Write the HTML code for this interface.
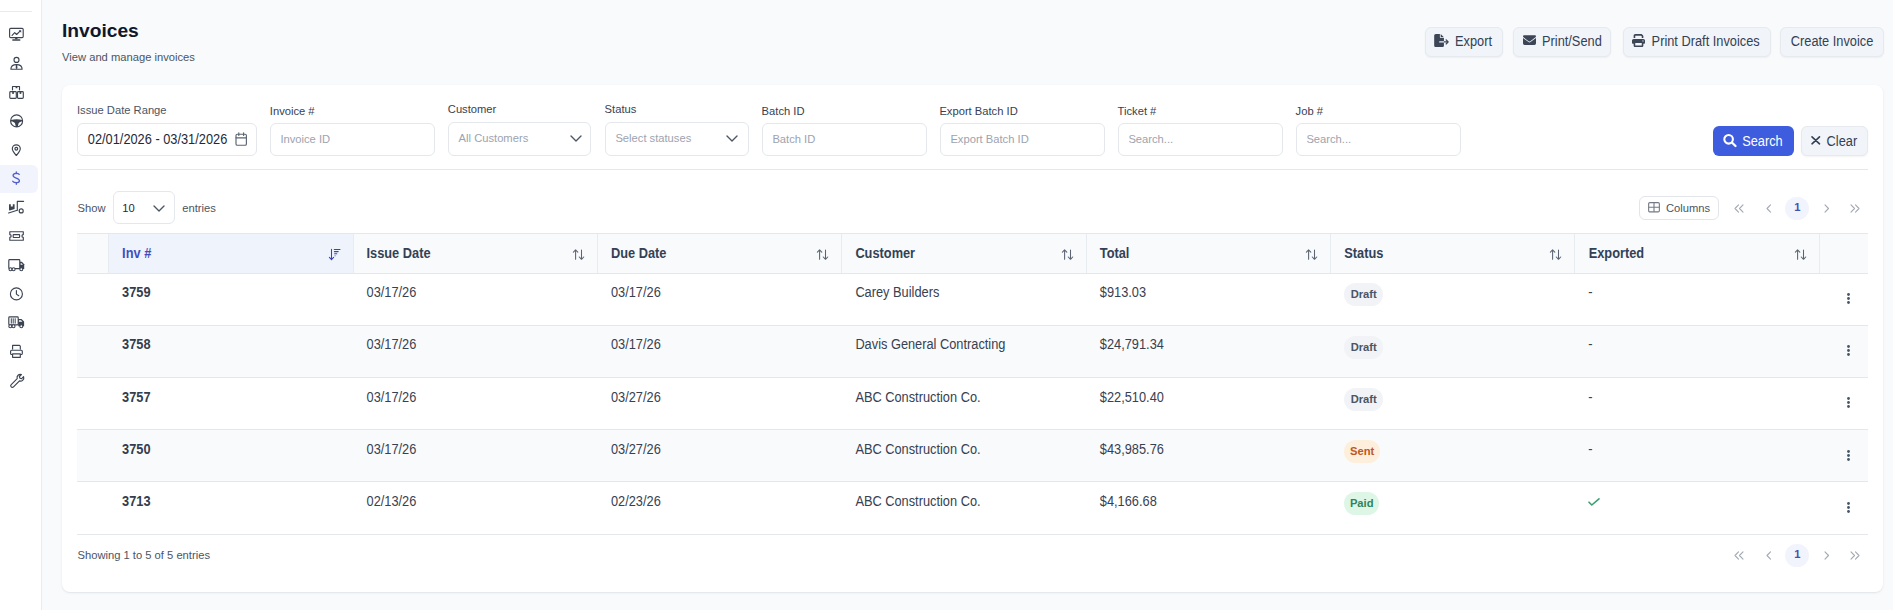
<!DOCTYPE html><html><head><meta charset="utf-8"><style>
html,body{margin:0;padding:0;width:1893px;height:610px;overflow:hidden;background:#f8fafc;font-family:"Liberation Sans",sans-serif;}
.t{position:absolute;white-space:nowrap;line-height:1;}
.b{position:absolute;box-sizing:border-box;}
svg{position:absolute;overflow:visible}
</style></head><body>
<div class="b" style="left:0px;top:0px;width:42px;height:610px;background:#fff;border-right:1px solid #e8ebf0"></div>
<div class="b" style="left:0px;top:11px;width:32px;height:1px;background:#e8eaee"></div>
<div class="b" style="left:0px;top:164.5px;width:38px;height:28.5px;background:#f1f4fd;border-radius:0 6px 6px 0"></div>
<svg style="left:0;top:0" width="42" height="400" viewBox="0 0 42 400">
<g fill="none" stroke="#3c4452" stroke-width="1.15" stroke-linecap="round" stroke-linejoin="round">
  <rect x="9.6" y="28.4" width="13.6" height="9.2" rx="1.1"/>
  <path d="M12.1 35.3l2.6-2.7 1.9 1.9 3.2-3.2"/>
  <circle cx="16.5" cy="59.9" r="2.5"/>
  <path d="M10.9 69.2c0-2.9 2.4-4.6 5.6-4.6s5.6 1.7 5.6 4.6z"/>
  <path d="M12.5 89.8V86.5h7v3.3"/>
  <rect x="9.8" y="91.6" width="6.5" height="6.8" rx="0.9"/>
  <rect x="17.5" y="91.6" width="5.8" height="6.8" rx="0.9"/>
  <circle cx="16.6" cy="120.9" r="6.0"/>
  <path d="M16.3 155.5c-2.7-3-4-4.9-4-6.7a4 4 0 0 1 8 0c0 1.8-1.3 3.7-4 6.7z"/>
  <circle cx="16.3" cy="148.7" r="1.4"/>
  <path d="M17.3 210.3V201.3h6.3M8.6 213l8.7-2.7"/>
  <circle cx="21.2" cy="210.9" r="2.0"/>
  <path d="M9.8 231.7h13.5v2.9a1.4 1.4 0 0 0 0 2.8v2.9H9.8v-2.9a1.4 1.4 0 0 0 0-2.8z"/>
  <rect x="13.2" y="234.6" width="6.4" height="2.9" rx="0.4"/>
  <rect x="8.8" y="259.6" width="11" height="9" rx="0.8"/>
  <circle cx="16.4" cy="293.9" r="6.0"/>
  <path d="M16.4 290.6v3.5l2.3 1.6"/>
  <rect x="8.8" y="316.9" width="9.4" height="8" rx="0.8"/>
  <path d="M11.3 318.7v4.5M13.2 318.7v4.5M15.2 318.7v4.5" stroke-width="1"/>
  <path d="M12.6 349.1V345.3h6.9l0.8 0.8v3"/>
  <rect x="10.6" y="350.2" width="11.7" height="4.3" rx="1"/>
  <rect x="12.6" y="353.9" width="7.7" height="3.4" fill="#fff"/>
  <path d="M11.2 384.6l6-6a3.3 3.3 0 0 1 4.2-4.1l-2 2 0.5 1.7 1.7 0.5 2-2a3.3 3.3 0 0 1-4.1 4.2l-6 6a1.2 1.2 0 0 1-2.3-2.3z"/>
</g>
<g fill="#3c4452">
  <path d="M18.6 30.2h2.6v2.6z"/>
  <path d="M15.1 37.6h2.4v1.6h-2.4z"/>
  <rect x="12.3" y="39.2" width="8" height="1.5" rx="0.3"/>
  <path d="M15.9 64.6h1.2l0.4 3.5-0.9 1.1-0.9-1.1z"/>
  <rect x="15.6" y="86.5" width="1.8" height="1.7"/>
  <rect x="12.2" y="91.6" width="1.7" height="2.3"/>
  <rect x="19.6" y="91.6" width="1.7" height="2.3"/>
  <path d="M10.8 120.1c3.8-1.1 7.8-1.1 11.6 0v1.5c-1.6 0-2.9 0.5-3.8 1.6l-0.9 3.9h-1.8l-0.9-3.9c-0.9-1.1-2.2-1.6-3.8-1.6z"/>
  <path d="M9 204.3h1.8v2.2h2v-2.2h1.8v4.8l-4.8 1.4-0.8-0.2z"/>
  <path d="M19.8 261.8h2.1l2.3 2.4v4.8h-4.4z"/>
  <path d="M18.2 318.9h3.3l2.6 2.7v4.6h-5.9z"/>
</g>
<g fill="#fff" stroke="#3c4452" stroke-width="1.1">
  <circle cx="10.5" cy="269.2" r="1.5"/><circle cx="13.6" cy="269.2" r="1.5"/><circle cx="21.3" cy="269.2" r="1.5"/>
  <circle cx="10.3" cy="326.2" r="1.5"/><circle cx="13.5" cy="326.2" r="1.5"/><circle cx="21.3" cy="326.2" r="1.5"/>
</g>
<path d="M20.6 263.3h0.9l1.4 1.5h-2.3z" fill="#fff"/>
<path d="M19 320.3h2l1.4 1.5H19z" fill="#fff"/>
<g fill="none" stroke="#5060cc" stroke-width="1.3" stroke-linecap="round">
  <path d="M19.2 174.4c-0.6-0.8-1.6-1.1-3-1.1-1.9 0-3.1 0.9-3.1 2.2 0 3.2 6.3 1.8 6.3 5.2 0 1.3-1.3 2-3.1 2-1.6 0-2.8-0.5-3.5-1.4"/>
  <path d="M16.3 172v1.6M16.3 182.7v1.6"/>
</g>
</svg>
<div class="t" style="left:62.00px;top:21.04px;font-size:19.2px;color:#0f172a;font-weight:700;">Invoices</div>
<div class="t" style="left:62.00px;top:52.02px;font-size:11.2px;color:#4b5563;font-weight:400;">View and manage invoices</div>
<div class="b" style="left:1424.5px;top:27px;width:78px;height:29.5px;background:#f1f4f8;border:1px solid #e6e9ee;border-radius:6px;box-shadow:0 1px 2px rgba(15,23,42,0.05)"></div>
<svg style="left:1434px;top:33.5px;" width="15" height="13" viewBox="0 0 576 512"><path fill="#3d4656" d="M0 64C0 28.7 28.7 0 64 0H224V128c0 17.7 14.3 32 32 32H384V288H216c-13.3 0-24 10.7-24 24s10.7 24 24 24H384V448c0 35.3-28.7 64-64 64H64c-35.3 0-64-28.7-64-64V64zM384 336V288H494.1l-39-39c-9.4-9.4-9.4-24.6 0-33.9s24.6-9.4 33.9 0l80 80c9.4 9.4 9.4 24.6 0 33.9l-80 80c-9.4 9.4-24.6 9.4-33.9 0s-9.4-24.6 0-33.9l39-39H384zm0-208H256V0L384 128z"/></svg>
<div class="t" style="left:1455.00px;top:36.06px;font-size:12.8px;color:#334155;font-weight:400;transform:scaleY(1.1);transform-origin:0 84.67%;">Export</div>
<div class="b" style="left:1512.5px;top:27px;width:98.7px;height:29.5px;background:#f1f4f8;border:1px solid #e6e9ee;border-radius:6px;box-shadow:0 1px 2px rgba(15,23,42,0.05)"></div>
<svg style="left:1523px;top:35px;" width="13" height="10" viewBox="0 0 512 384"><path fill="#3d4656" d="M48 0C21.5 0 0 21.5 0 48c0 15.1 7.1 29.3 19.2 38.4L236.8 249.6c11.4 8.5 27 8.5 38.4 0L492.8 86.4c12.1-9.1 19.2-23.3 19.2-38.4c0-26.5-21.5-48-48-48H48zM0 112V320c0 35.3 28.7 64 64 64H448c35.3 0 64-28.7 64-64V112L294.4 275.2c-22.8 17.1-54 17.1-76.8 0L0 112z"/></svg>
<div class="t" style="left:1542.00px;top:36.06px;font-size:12.8px;color:#334155;font-weight:400;transform:scaleY(1.1);transform-origin:0 84.67%;">Print/Send</div>
<div class="b" style="left:1622.8px;top:27px;width:148px;height:29.5px;background:#f1f4f8;border:1px solid #e6e9ee;border-radius:6px;box-shadow:0 1px 2px rgba(15,23,42,0.05)"></div>
<svg style="left:1632.3px;top:33.5px;" width="13" height="13" viewBox="0 0 512 512"><path fill="#3d4656" d="M128 0C92.7 0 64 28.7 64 64v96h64V64H354.7L384 93.3V160h64V93.3c0-17-6.7-33.3-18.7-45.3L400 18.7C388 6.7 371.7 0 354.7 0H128zM384 352v32 64H128V384 368 352H384zm64 32h32c17.7 0 32-14.3 32-32V256c0-35.3-28.7-64-64-64H64c-35.3 0-64 28.7-64 64v96c0 17.7 14.3 32 32 32H64v64c0 35.3 28.7 64 64 64H384c35.3 0 64-28.7 64-64V384zM432 248a24 24 0 1 1 0 48 24 24 0 1 1 0-48z"/></svg>
<div class="t" style="left:1651.60px;top:36.06px;font-size:12.8px;color:#334155;font-weight:400;transform:scaleY(1.1);transform-origin:0 84.67%;">Print Draft Invoices</div>
<div class="b" style="left:1780.2px;top:27px;width:103.5px;height:29.5px;background:#f1f4f8;border:1px solid #e6e9ee;border-radius:6px;box-shadow:0 1px 2px rgba(15,23,42,0.05)"></div>
<div class="t" style="left:1790.80px;top:36.06px;font-size:12.8px;color:#334155;font-weight:400;transform:scaleY(1.1);transform-origin:0 84.67%;">Create Invoice</div>
<div class="b" style="left:61.5px;top:85px;width:1821px;height:507px;background:#fff;border-radius:8px;box-shadow:0 1px 3px rgba(15,23,42,0.07),0 1px 1px rgba(15,23,42,0.03)"></div>
<div class="t" style="left:77.00px;top:105.02px;font-size:11.2px;color:#4b5563;font-weight:400;">Issue Date Range</div>
<div class="t" style="left:269.80px;top:106.02px;font-size:11.2px;color:#374151;font-weight:400;">Invoice #</div>
<div class="t" style="left:447.80px;top:104.02px;font-size:11.2px;color:#374151;font-weight:400;">Customer</div>
<div class="t" style="left:604.60px;top:104.02px;font-size:11.2px;color:#374151;font-weight:400;">Status</div>
<div class="t" style="left:761.60px;top:106.02px;font-size:11.2px;color:#374151;font-weight:400;">Batch ID</div>
<div class="t" style="left:939.40px;top:106.02px;font-size:11.2px;color:#374151;font-weight:400;">Export Batch ID</div>
<div class="t" style="left:1117.60px;top:106.02px;font-size:11.2px;color:#374151;font-weight:400;">Ticket #</div>
<div class="t" style="left:1295.60px;top:106.02px;font-size:11.2px;color:#374151;font-weight:400;">Job #</div>
<div class="b" style="left:77px;top:122.5px;width:179.5px;height:33px;background:#fff;border:1px solid #e4e7eb;border-radius:6px"></div>
<div class="t" style="left:87.80px;top:134.06px;font-size:12.8px;color:#1f2937;font-weight:400;transform:scaleY(1.1);transform-origin:0 84.67%;">02/01/2026 - 03/31/2026</div>
<svg style="left:234.5px;top:131.5px;" width="12" height="14" viewBox="0 0 12 14"><g fill="none" stroke="#5b6472" stroke-width="1.15" stroke-linecap="round" stroke-linejoin="round"><rect x="1" y="2.2" width="10.4" height="11" rx="1.3"/><path d="M3.8 0.8v2.6M8.6 0.8v2.6M1 5.8h10.4"/></g></svg>
<div class="b" style="left:270px;top:123px;width:164.5px;height:32.5px;background:#fff;border:1px solid #e4e7eb;border-radius:6px"></div>
<div class="t" style="left:280.40px;top:134.02px;font-size:11.2px;color:#9ca3af;font-weight:400;">Invoice ID</div>
<div class="b" style="left:448px;top:121.5px;width:143px;height:34px;background:#fff;border:1px solid #e4e7eb;border-radius:6px"></div>
<div class="t" style="left:458.60px;top:133.02px;font-size:11.2px;color:#9ca3af;font-weight:400;">All Customers</div>
<svg style="left:569.7px;top:135px;" width="12" height="7" viewBox="0 0 12 7"><path d="M1 1l5 5 5-5" fill="none" stroke="#4b5563" stroke-width="1.35" stroke-linecap="round" stroke-linejoin="round"/></svg>
<div class="b" style="left:605px;top:121.5px;width:143.5px;height:34px;background:#fff;border:1px solid #e4e7eb;border-radius:6px"></div>
<div class="t" style="left:615.40px;top:133.02px;font-size:11.2px;color:#9ca3af;font-weight:400;">Select statuses</div>
<svg style="left:725.9px;top:135px;" width="12" height="7" viewBox="0 0 12 7"><path d="M1 1l5 5 5-5" fill="none" stroke="#4b5563" stroke-width="1.35" stroke-linecap="round" stroke-linejoin="round"/></svg>
<div class="b" style="left:762px;top:123px;width:164.5px;height:32.5px;background:#fff;border:1px solid #e4e7eb;border-radius:6px"></div>
<div class="t" style="left:772.40px;top:134.02px;font-size:11.2px;color:#9ca3af;font-weight:400;">Batch ID</div>
<div class="b" style="left:940px;top:123px;width:164.5px;height:32.5px;background:#fff;border:1px solid #e4e7eb;border-radius:6px"></div>
<div class="t" style="left:950.40px;top:134.02px;font-size:11.2px;color:#9ca3af;font-weight:400;">Export Batch ID</div>
<div class="b" style="left:1118px;top:123px;width:164.5px;height:32.5px;background:#fff;border:1px solid #e4e7eb;border-radius:6px"></div>
<div class="t" style="left:1128.40px;top:134.02px;font-size:11.2px;color:#9ca3af;font-weight:400;">Search...</div>
<div class="b" style="left:1296px;top:123px;width:164.5px;height:32.5px;background:#fff;border:1px solid #e4e7eb;border-radius:6px"></div>
<div class="t" style="left:1306.40px;top:134.02px;font-size:11.2px;color:#9ca3af;font-weight:400;">Search...</div>
<div class="b" style="left:1713px;top:126px;width:81px;height:30px;background:#3d5cde;border-radius:6px"></div>
<svg style="left:1723px;top:134px;" width="14" height="13" viewBox="0 0 14 13"><g fill="none" stroke="#fff" stroke-linecap="round"><circle cx="5.6" cy="5.3" r="4.3" stroke-width="2.1"/><path d="M8.9 8.5l3.6 3.5" stroke-width="2.3"/></g></svg>
<div class="t" style="left:1742.20px;top:136.06px;font-size:12.8px;color:#fff;font-weight:400;transform:scaleY(1.1);transform-origin:0 84.67%;">Search</div>
<div class="b" style="left:1800.5px;top:126px;width:67px;height:29.5px;background:#f1f4f8;border:1px solid #e6e9ee;border-radius:6px;box-shadow:0 1px 2px rgba(15,23,42,0.05)"></div>
<svg style="left:1811px;top:136px;" width="9.5" height="8.5" viewBox="0 0 9.5 8.5"><path d="M1 0.8l7.5 7M8.5 0.8L1 7.8" stroke="#334155" stroke-width="1.6" stroke-linecap="round"/></svg>
<div class="t" style="left:1826.60px;top:136.06px;font-size:12.8px;color:#334155;font-weight:400;transform:scaleY(1.1);transform-origin:0 84.67%;">Clear</div>
<div class="b" style="left:77px;top:169px;width:1790.5px;height:1px;background:#e5e7eb"></div>
<div class="t" style="left:77.50px;top:203.02px;font-size:11.2px;color:#4b5563;font-weight:400;">Show</div>
<div class="b" style="left:112.7px;top:191.3px;width:62.5px;height:33px;background:#fff;border:1px solid #e4e7eb;border-radius:6px"></div>
<div class="t" style="left:122.20px;top:203.02px;font-size:11.2px;color:#1f2937;font-weight:400;">10</div>
<svg style="left:152.8px;top:205px;" width="12" height="7" viewBox="0 0 12 7"><path d="M1 1l5 5 5-5" fill="none" stroke="#4b5563" stroke-width="1.35" stroke-linecap="round" stroke-linejoin="round"/></svg>
<div class="t" style="left:182.30px;top:203.02px;font-size:11.2px;color:#4b5563;font-weight:400;">entries</div>
<div class="b" style="left:1639px;top:196px;width:79.5px;height:23.6px;background:#fff;border:1px solid #e2e5ea;border-radius:6px"></div>
<svg style="left:1648px;top:202px;" width="12" height="10.5" viewBox="0 0 12 10.5"><g fill="none" stroke="#737a86" stroke-width="1.1"><rect x="0.65" y="0.65" width="10.7" height="9.2" rx="1.2"/><path d="M6 0.65v9.2M0.65 5.25h10.7"/></g></svg>
<div class="t" style="left:1666.00px;top:203.02px;font-size:11.2px;color:#4b5563;font-weight:400;">Columns</div>
<svg style="left:1734.3px;top:203.5px;" width="10" height="9" viewBox="0 0 10 9"><path d="M4.5 0.8L1 4.5l3.5 3.7M9 0.8L5.5 4.5 9 8.2" fill="none" stroke="#a3a9b3" stroke-width="1.1" stroke-linecap="round" stroke-linejoin="round"/></svg>
<svg style="left:1766px;top:203.5px;" width="5.5" height="9" viewBox="0 0 5.5 9"><path d="M4.5 0.8L1 4.5l3.5 3.7" fill="none" stroke="#a3a9b3" stroke-width="1.1" stroke-linecap="round" stroke-linejoin="round"/></svg>
<div class="b" style="left:1785px;top:196.5px;width:23.5px;height:23.5px;background:#f2f4fd;border-radius:50%"></div>
<div class="t" style="left:1794.30px;top:202.02px;font-size:11.2px;color:#4351b0;font-weight:700;">1</div>
<svg style="left:1823.5px;top:203.5px;" width="5.5" height="9" viewBox="0 0 5.5 9"><path d="M1 0.8l3.5 3.7L1 8.2" fill="none" stroke="#a3a9b3" stroke-width="1.1" stroke-linecap="round" stroke-linejoin="round"/></svg>
<svg style="left:1850px;top:203.5px;" width="10" height="9" viewBox="0 0 10 9"><path d="M1 0.8l3.5 3.7L1 8.2M5.5 0.8L9 4.5 5.5 8.2" fill="none" stroke="#a3a9b3" stroke-width="1.1" stroke-linecap="round" stroke-linejoin="round"/></svg>
<div class="b" style="left:77px;top:233px;width:1790.5px;height:41px;background:#f8fafc;border-top:1px solid #e5e7eb;border-bottom:1px solid #e5e7eb"></div>
<div class="b" style="left:109px;top:234px;width:244px;height:39px;background:#eff3fc"></div>
<div class="b" style="left:108px;top:234px;width:1px;height:39px;background:#e8ebef"></div>
<div class="b" style="left:353px;top:234px;width:1px;height:39px;background:#e8ebef"></div>
<div class="b" style="left:597px;top:234px;width:1px;height:39px;background:#e8ebef"></div>
<div class="b" style="left:841px;top:234px;width:1px;height:39px;background:#e8ebef"></div>
<div class="b" style="left:1086px;top:234px;width:1px;height:39px;background:#e8ebef"></div>
<div class="b" style="left:1330px;top:234px;width:1px;height:39px;background:#e8ebef"></div>
<div class="b" style="left:1574px;top:234px;width:1px;height:39px;background:#e8ebef"></div>
<div class="b" style="left:1819px;top:234px;width:1px;height:39px;background:#e8ebef"></div>
<div class="t" style="left:122.10px;top:248.06px;font-size:12.8px;color:#3f4fc0;font-weight:700;transform:scaleY(1.1);transform-origin:0 84.67%;">Inv #</div>
<div class="t" style="left:366.53px;top:248.06px;font-size:12.8px;color:#334155;font-weight:700;transform:scaleY(1.1);transform-origin:0 84.67%;">Issue Date</div>
<div class="t" style="left:610.96px;top:248.06px;font-size:12.8px;color:#334155;font-weight:700;transform:scaleY(1.1);transform-origin:0 84.67%;">Due Date</div>
<div class="t" style="left:855.39px;top:248.06px;font-size:12.8px;color:#334155;font-weight:700;transform:scaleY(1.1);transform-origin:0 84.67%;">Customer</div>
<div class="t" style="left:1099.82px;top:248.06px;font-size:12.8px;color:#334155;font-weight:700;transform:scaleY(1.1);transform-origin:0 84.67%;">Total</div>
<div class="t" style="left:1344.25px;top:248.06px;font-size:12.8px;color:#334155;font-weight:700;transform:scaleY(1.1);transform-origin:0 84.67%;">Status</div>
<div class="t" style="left:1588.68px;top:248.06px;font-size:12.8px;color:#334155;font-weight:700;transform:scaleY(1.1);transform-origin:0 84.67%;">Exported</div>
<svg style="left:573px;top:248.5px;" width="11" height="12" viewBox="0 0 11 12"><g fill="none" stroke="#5b6472" stroke-width="1.05" stroke-linecap="round" stroke-linejoin="round"><path d="M2.6 10.3V0.9M0.4 3.2L2.6 0.9l2.2 2.3M8.5 0.9v9.4M6.3 8l2.2 2.3 2.2-2.3"/></g></svg>
<svg style="left:817px;top:248.5px;" width="11" height="12" viewBox="0 0 11 12"><g fill="none" stroke="#5b6472" stroke-width="1.05" stroke-linecap="round" stroke-linejoin="round"><path d="M2.6 10.3V0.9M0.4 3.2L2.6 0.9l2.2 2.3M8.5 0.9v9.4M6.3 8l2.2 2.3 2.2-2.3"/></g></svg>
<svg style="left:1062px;top:248.5px;" width="11" height="12" viewBox="0 0 11 12"><g fill="none" stroke="#5b6472" stroke-width="1.05" stroke-linecap="round" stroke-linejoin="round"><path d="M2.6 10.3V0.9M0.4 3.2L2.6 0.9l2.2 2.3M8.5 0.9v9.4M6.3 8l2.2 2.3 2.2-2.3"/></g></svg>
<svg style="left:1306px;top:248.5px;" width="11" height="12" viewBox="0 0 11 12"><g fill="none" stroke="#5b6472" stroke-width="1.05" stroke-linecap="round" stroke-linejoin="round"><path d="M2.6 10.3V0.9M0.4 3.2L2.6 0.9l2.2 2.3M8.5 0.9v9.4M6.3 8l2.2 2.3 2.2-2.3"/></g></svg>
<svg style="left:1550px;top:248.5px;" width="11" height="12" viewBox="0 0 11 12"><g fill="none" stroke="#5b6472" stroke-width="1.05" stroke-linecap="round" stroke-linejoin="round"><path d="M2.6 10.3V0.9M0.4 3.2L2.6 0.9l2.2 2.3M8.5 0.9v9.4M6.3 8l2.2 2.3 2.2-2.3"/></g></svg>
<svg style="left:1795px;top:248.5px;" width="11" height="12" viewBox="0 0 11 12"><g fill="none" stroke="#5b6472" stroke-width="1.05" stroke-linecap="round" stroke-linejoin="round"><path d="M2.6 10.3V0.9M0.4 3.2L2.6 0.9l2.2 2.3M8.5 0.9v9.4M6.3 8l2.2 2.3 2.2-2.3"/></g></svg>
<svg style="left:0;top:0" width="400" height="300" viewBox="0 0 400 300"><g fill="none" stroke="#3b44b0" stroke-width="1.05" stroke-linecap="round" stroke-linejoin="round"><path d="M331.5 249.3v10.4M329.4 257.4l2.1 2.3 2.1-2.3"/><path d="M334.3 249.5h5.7M334.4 251.6h3.8M334.6 253.7h2.2" /><path d="M334.7 255.8h1" stroke-width="0.9" stroke="#8e94d8"/></g></svg><div class="t" style="left:122.10px;top:287.06px;font-size:12.8px;color:#333d4e;font-weight:700;transform:scaleY(1.1);transform-origin:0 84.67%;">3759</div>
<div class="t" style="left:366.53px;top:287.06px;font-size:12.8px;color:#374151;font-weight:400;transform:scaleY(1.1);transform-origin:0 84.67%;">03/17/26</div>
<div class="t" style="left:610.96px;top:287.06px;font-size:12.8px;color:#374151;font-weight:400;transform:scaleY(1.1);transform-origin:0 84.67%;">03/17/26</div>
<div class="t" style="left:855.39px;top:287.06px;font-size:12.8px;color:#374151;font-weight:400;transform:scaleY(1.1);transform-origin:0 84.67%;">Carey Builders</div>
<div class="t" style="left:1099.82px;top:287.06px;font-size:12.8px;color:#374151;font-weight:400;transform:scaleY(1.1);transform-origin:0 84.67%;">$913.03</div>
<div class="b" style="left:1344px;top:282.8px;width:39px;height:23.6px;background:#f1f3f7;border-radius:12px"></div>
<div class="t" style="left:1350.65px;top:289.02px;font-size:11.2px;color:#4b5563;font-weight:700;">Draft</div>
<div class="t" style="left:1588.20px;top:287.06px;font-size:12.8px;color:#374151;font-weight:400;transform:scaleY(1.1);transform-origin:0 84.67%;">-</div>
<svg style="left:1847.3px;top:292.8px;" width="3" height="11" viewBox="0 0 3 11"><g fill="#475569"><circle cx="1.5" cy="1.5" r="1.4"/><circle cx="1.5" cy="5.5" r="1.4"/><circle cx="1.5" cy="9.5" r="1.4"/></g></svg>
<div class="b" style="left:77px;top:325.25px;width:1790.5px;height:52.25px;background:#f9fafb"></div>
<div class="t" style="left:122.10px;top:339.06px;font-size:12.8px;color:#333d4e;font-weight:700;transform:scaleY(1.1);transform-origin:0 84.67%;">3758</div>
<div class="t" style="left:366.53px;top:339.06px;font-size:12.8px;color:#374151;font-weight:400;transform:scaleY(1.1);transform-origin:0 84.67%;">03/17/26</div>
<div class="t" style="left:610.96px;top:339.06px;font-size:12.8px;color:#374151;font-weight:400;transform:scaleY(1.1);transform-origin:0 84.67%;">03/17/26</div>
<div class="t" style="left:855.39px;top:339.06px;font-size:12.8px;color:#374151;font-weight:400;transform:scaleY(1.1);transform-origin:0 84.67%;">Davis General Contracting</div>
<div class="t" style="left:1099.82px;top:339.06px;font-size:12.8px;color:#374151;font-weight:400;transform:scaleY(1.1);transform-origin:0 84.67%;">$24,791.34</div>
<div class="b" style="left:1344px;top:335.8px;width:39px;height:23.6px;background:#f1f3f7;border-radius:12px"></div>
<div class="t" style="left:1350.65px;top:342.02px;font-size:11.2px;color:#4b5563;font-weight:700;">Draft</div>
<div class="t" style="left:1588.20px;top:339.06px;font-size:12.8px;color:#374151;font-weight:400;transform:scaleY(1.1);transform-origin:0 84.67%;">-</div>
<svg style="left:1847.3px;top:345.05px;" width="3" height="11" viewBox="0 0 3 11"><g fill="#475569"><circle cx="1.5" cy="1.5" r="1.4"/><circle cx="1.5" cy="5.5" r="1.4"/><circle cx="1.5" cy="9.5" r="1.4"/></g></svg>
<div class="t" style="left:122.10px;top:392.06px;font-size:12.8px;color:#333d4e;font-weight:700;transform:scaleY(1.1);transform-origin:0 84.67%;">3757</div>
<div class="t" style="left:366.53px;top:392.06px;font-size:12.8px;color:#374151;font-weight:400;transform:scaleY(1.1);transform-origin:0 84.67%;">03/17/26</div>
<div class="t" style="left:610.96px;top:392.06px;font-size:12.8px;color:#374151;font-weight:400;transform:scaleY(1.1);transform-origin:0 84.67%;">03/27/26</div>
<div class="t" style="left:855.39px;top:392.06px;font-size:12.8px;color:#374151;font-weight:400;transform:scaleY(1.1);transform-origin:0 84.67%;">ABC Construction Co.</div>
<div class="t" style="left:1099.82px;top:392.06px;font-size:12.8px;color:#374151;font-weight:400;transform:scaleY(1.1);transform-origin:0 84.67%;">$22,510.40</div>
<div class="b" style="left:1344px;top:387.8px;width:39px;height:23.6px;background:#f1f3f7;border-radius:12px"></div>
<div class="t" style="left:1350.65px;top:394.02px;font-size:11.2px;color:#4b5563;font-weight:700;">Draft</div>
<div class="t" style="left:1588.20px;top:392.06px;font-size:12.8px;color:#374151;font-weight:400;transform:scaleY(1.1);transform-origin:0 84.67%;">-</div>
<svg style="left:1847.3px;top:397.3px;" width="3" height="11" viewBox="0 0 3 11"><g fill="#475569"><circle cx="1.5" cy="1.5" r="1.4"/><circle cx="1.5" cy="5.5" r="1.4"/><circle cx="1.5" cy="9.5" r="1.4"/></g></svg>
<div class="b" style="left:77px;top:429.75px;width:1790.5px;height:52.25px;background:#f9fafb"></div>
<div class="t" style="left:122.10px;top:444.06px;font-size:12.8px;color:#333d4e;font-weight:700;transform:scaleY(1.1);transform-origin:0 84.67%;">3750</div>
<div class="t" style="left:366.53px;top:444.06px;font-size:12.8px;color:#374151;font-weight:400;transform:scaleY(1.1);transform-origin:0 84.67%;">03/17/26</div>
<div class="t" style="left:610.96px;top:444.06px;font-size:12.8px;color:#374151;font-weight:400;transform:scaleY(1.1);transform-origin:0 84.67%;">03/27/26</div>
<div class="t" style="left:855.39px;top:444.06px;font-size:12.8px;color:#374151;font-weight:400;transform:scaleY(1.1);transform-origin:0 84.67%;">ABC Construction Co.</div>
<div class="t" style="left:1099.82px;top:444.06px;font-size:12.8px;color:#374151;font-weight:400;transform:scaleY(1.1);transform-origin:0 84.67%;">$43,985.76</div>
<div class="b" style="left:1344px;top:439.8px;width:36px;height:23.6px;background:#feefdc;border-radius:12px"></div>
<div class="t" style="left:1350.10px;top:446.02px;font-size:11.2px;color:#c05621;font-weight:700;">Sent</div>
<div class="t" style="left:1588.20px;top:444.06px;font-size:12.8px;color:#374151;font-weight:400;transform:scaleY(1.1);transform-origin:0 84.67%;">-</div>
<svg style="left:1847.3px;top:449.55px;" width="3" height="11" viewBox="0 0 3 11"><g fill="#475569"><circle cx="1.5" cy="1.5" r="1.4"/><circle cx="1.5" cy="5.5" r="1.4"/><circle cx="1.5" cy="9.5" r="1.4"/></g></svg>
<div class="t" style="left:122.10px;top:496.06px;font-size:12.8px;color:#333d4e;font-weight:700;transform:scaleY(1.1);transform-origin:0 84.67%;">3713</div>
<div class="t" style="left:366.53px;top:496.06px;font-size:12.8px;color:#374151;font-weight:400;transform:scaleY(1.1);transform-origin:0 84.67%;">02/13/26</div>
<div class="t" style="left:610.96px;top:496.06px;font-size:12.8px;color:#374151;font-weight:400;transform:scaleY(1.1);transform-origin:0 84.67%;">02/23/26</div>
<div class="t" style="left:855.39px;top:496.06px;font-size:12.8px;color:#374151;font-weight:400;transform:scaleY(1.1);transform-origin:0 84.67%;">ABC Construction Co.</div>
<div class="t" style="left:1099.82px;top:496.06px;font-size:12.8px;color:#374151;font-weight:400;transform:scaleY(1.1);transform-origin:0 84.67%;">$4,166.68</div>
<div class="b" style="left:1344px;top:491.8px;width:35px;height:23.6px;background:#ddf6e6;border-radius:12px"></div>
<div class="t" style="left:1349.90px;top:498.02px;font-size:11.2px;color:#2f855a;font-weight:700;">Paid</div>
<svg style="left:1588.4px;top:497.7px;" width="12" height="8" viewBox="0 0 12 8"><path d="M1 4.2l2.8 2.8L11 0.8" fill="none" stroke="#3a9f72" stroke-width="1.6" stroke-linecap="round" stroke-linejoin="round"/></svg>
<svg style="left:1847.3px;top:501.8px;" width="3" height="11" viewBox="0 0 3 11"><g fill="#475569"><circle cx="1.5" cy="1.5" r="1.4"/><circle cx="1.5" cy="5.5" r="1.4"/><circle cx="1.5" cy="9.5" r="1.4"/></g></svg>
<div class="b" style="left:77px;top:325px;width:1790.5px;height:1px;background:#e5e7eb"></div>
<div class="b" style="left:77px;top:377px;width:1790.5px;height:1px;background:#e5e7eb"></div>
<div class="b" style="left:77px;top:429px;width:1790.5px;height:1px;background:#e5e7eb"></div>
<div class="b" style="left:77px;top:481px;width:1790.5px;height:1px;background:#e5e7eb"></div>
<div class="b" style="left:77px;top:534px;width:1790.5px;height:1px;background:#e5e7eb"></div>
<div class="t" style="left:77.50px;top:550.02px;font-size:11.2px;color:#4b5563;font-weight:400;">Showing 1 to 5 of 5 entries</div>
<svg style="left:1734.3px;top:550.5px;" width="10" height="9" viewBox="0 0 10 9"><path d="M4.5 0.8L1 4.5l3.5 3.7M9 0.8L5.5 4.5 9 8.2" fill="none" stroke="#a3a9b3" stroke-width="1.1" stroke-linecap="round" stroke-linejoin="round"/></svg>
<svg style="left:1766px;top:550.5px;" width="5.5" height="9" viewBox="0 0 5.5 9"><path d="M4.5 0.8L1 4.5l3.5 3.7" fill="none" stroke="#a3a9b3" stroke-width="1.1" stroke-linecap="round" stroke-linejoin="round"/></svg>
<div class="b" style="left:1785px;top:543.5px;width:23.5px;height:23.5px;background:#f2f4fd;border-radius:50%"></div>
<div class="t" style="left:1794.30px;top:549.02px;font-size:11.2px;color:#4351b0;font-weight:700;">1</div>
<svg style="left:1823.5px;top:550.5px;" width="5.5" height="9" viewBox="0 0 5.5 9"><path d="M1 0.8l3.5 3.7L1 8.2" fill="none" stroke="#a3a9b3" stroke-width="1.1" stroke-linecap="round" stroke-linejoin="round"/></svg>
<svg style="left:1850px;top:550.5px;" width="10" height="9" viewBox="0 0 10 9"><path d="M1 0.8l3.5 3.7L1 8.2M5.5 0.8L9 4.5 5.5 8.2" fill="none" stroke="#a3a9b3" stroke-width="1.1" stroke-linecap="round" stroke-linejoin="round"/></svg>
</body></html>
